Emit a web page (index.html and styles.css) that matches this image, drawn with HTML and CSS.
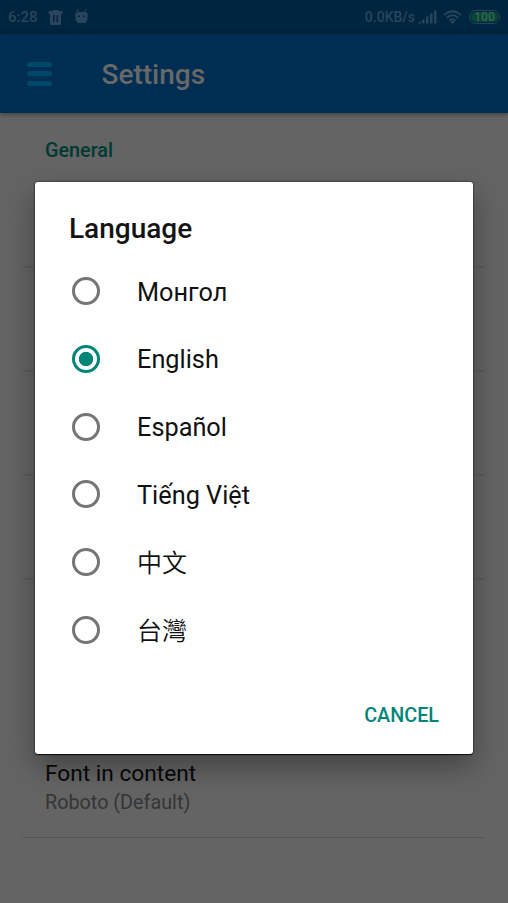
FILE: index.html
```html
<!DOCTYPE html>
<html lang="en">
<head>
  <meta charset="utf-8" />
  <title>Settings</title>
  <meta name="viewport" content="width=device-width, initial-scale=1" />
  <link rel="stylesheet" href="styles.css">
</head>
<body>
  <div class="status-bar">
    <span class="clock">6:28</span>
    <svg class="icon-trash" width="15" height="17" viewBox="0 0 15 17" fill="currentColor">
      <path fill-rule="evenodd" d="M5 1h5v1h4.5v3H13v10q0 1-1 1H3q-1 0-1-1V5H.5V2H5zM5 6v7h1.500V6zM8.500 6v7H10V6z"/>
    </svg>
    <svg class="icon-robot" width="13" height="16" viewBox="0 0 13 16">
      <path d="M3.500 5L2 1M9.500 5L11 1" stroke="currentColor" fill="none"/>
      <path fill="currentColor" fill-rule="evenodd" d="M2.500 4h8l1 1h1v7L10.500 15h-8L.5 12V5h1zM3 7.500V9h2V7.500zM8 7.500V9h2V7.500z"/>
    </svg>
    <span class="speed">0.0KB/s</span>
    <svg class="icon-signal" width="19" height="14" viewBox="0 0 19 14" fill="currentColor">
      <path d="M0 13l3-2v2.500H0zM4 10l2.500-1v4.500H4zM8 7l2.500-1v7.500H8zM12 4l2.500-1v10.500H12zM16 1l2.500-1v13.500H16z"/>
    </svg>
    <svg class="icon-wifi" width="19" height="15" viewBox="0 0 19 15">
      <g fill="none" stroke="currentColor" stroke-width="1.800">
        <path d="M.8 5.200Q9.500-2.800 18.200 5.200M3.600 8Q9.500 2.600 15.400 8M6.300 10.700Q9.500 7.800 12.700 10.700"/>
      </g>
      <path d="M7.300 11.500Q9.500 9.800 11.700 11.500L9.500 14z" fill="currentColor"/>
    </svg>
    <span class="battery"><span>100</span></span>
  </div>

  <header class="toolbar">
    <div class="menu">
      <span></span>
      <span></span>
      <span></span>
    </div>
    <h1>Settings</h1>
  </header>

  <main class="settings">
    <div class="row first"><h2>General</h2></div>
    <div class="row"></div>
    <div class="row"></div>
    <div class="row"></div>
    <div class="row last">
      <p class="name">Font in content</p>
      <p class="value">Roboto (Default)</p>
    </div>
  </main>

  <div class="overlay">
    <form class="dialog">
      <h3>Language</h3>
      <label><input type="radio" name="language"><span>Монгол</span></label>
      <label><input type="radio" name="language" checked><span>English</span></label>
      <label><input type="radio" name="language"><span>Español</span></label>
      <label><input type="radio" name="language"><span>Tiếng Việt</span></label>
      <label><input type="radio" name="language"><span class="cjk" lang="zh-CN">中文</span></label>
      <label><input type="radio" name="language"><span class="cjk" lang="zh-TW">台灣</span></label>
      <button type="button">CANCEL</button>
    </form>
  </div>
</body>
</html>
```
FILE: styles.css
```css
* {
  box-sizing: border-box;
}

body {
  margin: 0;
  height: 903px;
  overflow: hidden;
  font-family: Roboto, "Noto Sans CJK SC", sans-serif;
  background-color: #646464;
}

h1, h2, h3, p {
  margin: 0;
}

/* status bar */
.status-bar {
  display: flex;
  align-items: center;
  height: 34px;
  padding: 0 8px 0 8px;
  background-color: #00253f;
  color: #29455d;
  font-size: 14px;
  font-weight: 500;
}

.clock {
  width: 40px;
  font-size: 15px;
}

.icon-robot {
  margin-left: 12px;
  margin-top: -3px;
}

.speed {
  margin-left: auto;
}

.icon-signal {
  margin-left: 3px;
  margin-top: -1px;
}

.icon-wifi {
  margin: 0 7px 0 6px;
}

.battery {
  width: 31px;
  height: 14px;
  padding: 1px;
  border: 1px solid #29455d;
  border-radius: 7px;
}

.battery span {
  display: block;
  height: 10px;
  line-height: 11px;
  border-radius: 5px;
  background-color: #064735;
  color: #3b6458;
  font-size: 12px;
  font-weight: 500;
  text-align: center;
}

/* toolbar */
.toolbar {
  position: relative;
  display: flex;
  align-items: center;
  height: 79px;
  padding-left: 27px;
  background-color: #002e52;
  box-shadow: 0 1px 5px rgba(0, 0, 0, 0.45);
}

.menu {
  display: grid;
  gap: 4.500px;
  width: 25px;
}

.menu span {
  height: 5px;
  border-radius: 3px;
  background-color: #004867;
}

.toolbar h1 {
  margin: 2px 0 0 49.500px;
  font-size: 28px;
  font-weight: 500;
  color: #686868;
}

/* settings list */
.settings {
  padding: 0 23px 0 22px;
}

.row {
  height: 104px;
  padding-left: 23px;
  border-bottom: 2px solid #5c5c5c;
}

.row.first {
  height: 155px;
  padding-top: 26px;
}

.row h2 {
  font-size: 19.800px;
  line-height: 24px;
  font-weight: 500;
  color: #003a32;
}

.row.last {
  height: 258px;
  padding-top: 179px;
  border-bottom: 1px solid #565656;
}

.name {
  font-size: 22.700px;
  line-height: 30px;
  color: #080808;
}

.value {
  font-size: 19.800px;
  line-height: 28px;
  color: #353535;
}

/* language dialog */
.overlay {
  position: absolute;
  top: 0;
  left: 0;
  width: 508px;
  height: 903px;
  padding: 182px 35px 0;
}

.dialog {
  display: flex;
  flex-direction: column;
  height: 572px;
  padding: 29px 34px 0;
  border-radius: 3px;
  background-color: #fff;
  box-shadow: 0 1px 1px rgba(0, 0, 0, 0.8), 0 0 1px 1px rgba(0, 0, 0, 0.25), 0 12px 30px rgba(0, 0, 0, 0.35);
}

.dialog h3 {
  height: 46.400px;
  font-size: 28px;
  line-height: 36px;
  font-weight: 500;
  color: #141414;
}

.dialog label {
  display: flex;
  align-items: center;
  height: 67.700px;
  padding-left: 3px;
  font-size: 25.300px;
  color: #111;
}

.dialog label span {
  margin-top: 2px;
}

.dialog .cjk {
  margin-top: -1px;
  font-size: 25px;
  font-weight: 350;
}

.dialog input {
  appearance: none;
  width: 28px;
  height: 28px;
  margin: 0 37px 0 0;
  border: 3px solid #757575;
  border-radius: 50%;
}

.dialog input:checked {
  border-color: #008577;
  background: radial-gradient(circle, #008577 6.800px, #fff 7.500px);
}

.dialog button {
  align-self: flex-end;
  margin-top: 40.400px;
  padding: 0;
  border: 0;
  background: none;
  font-family: inherit;
  font-size: 19.800px;
  line-height: 24px;
  font-weight: 500;
  color: #008577;
}
```
